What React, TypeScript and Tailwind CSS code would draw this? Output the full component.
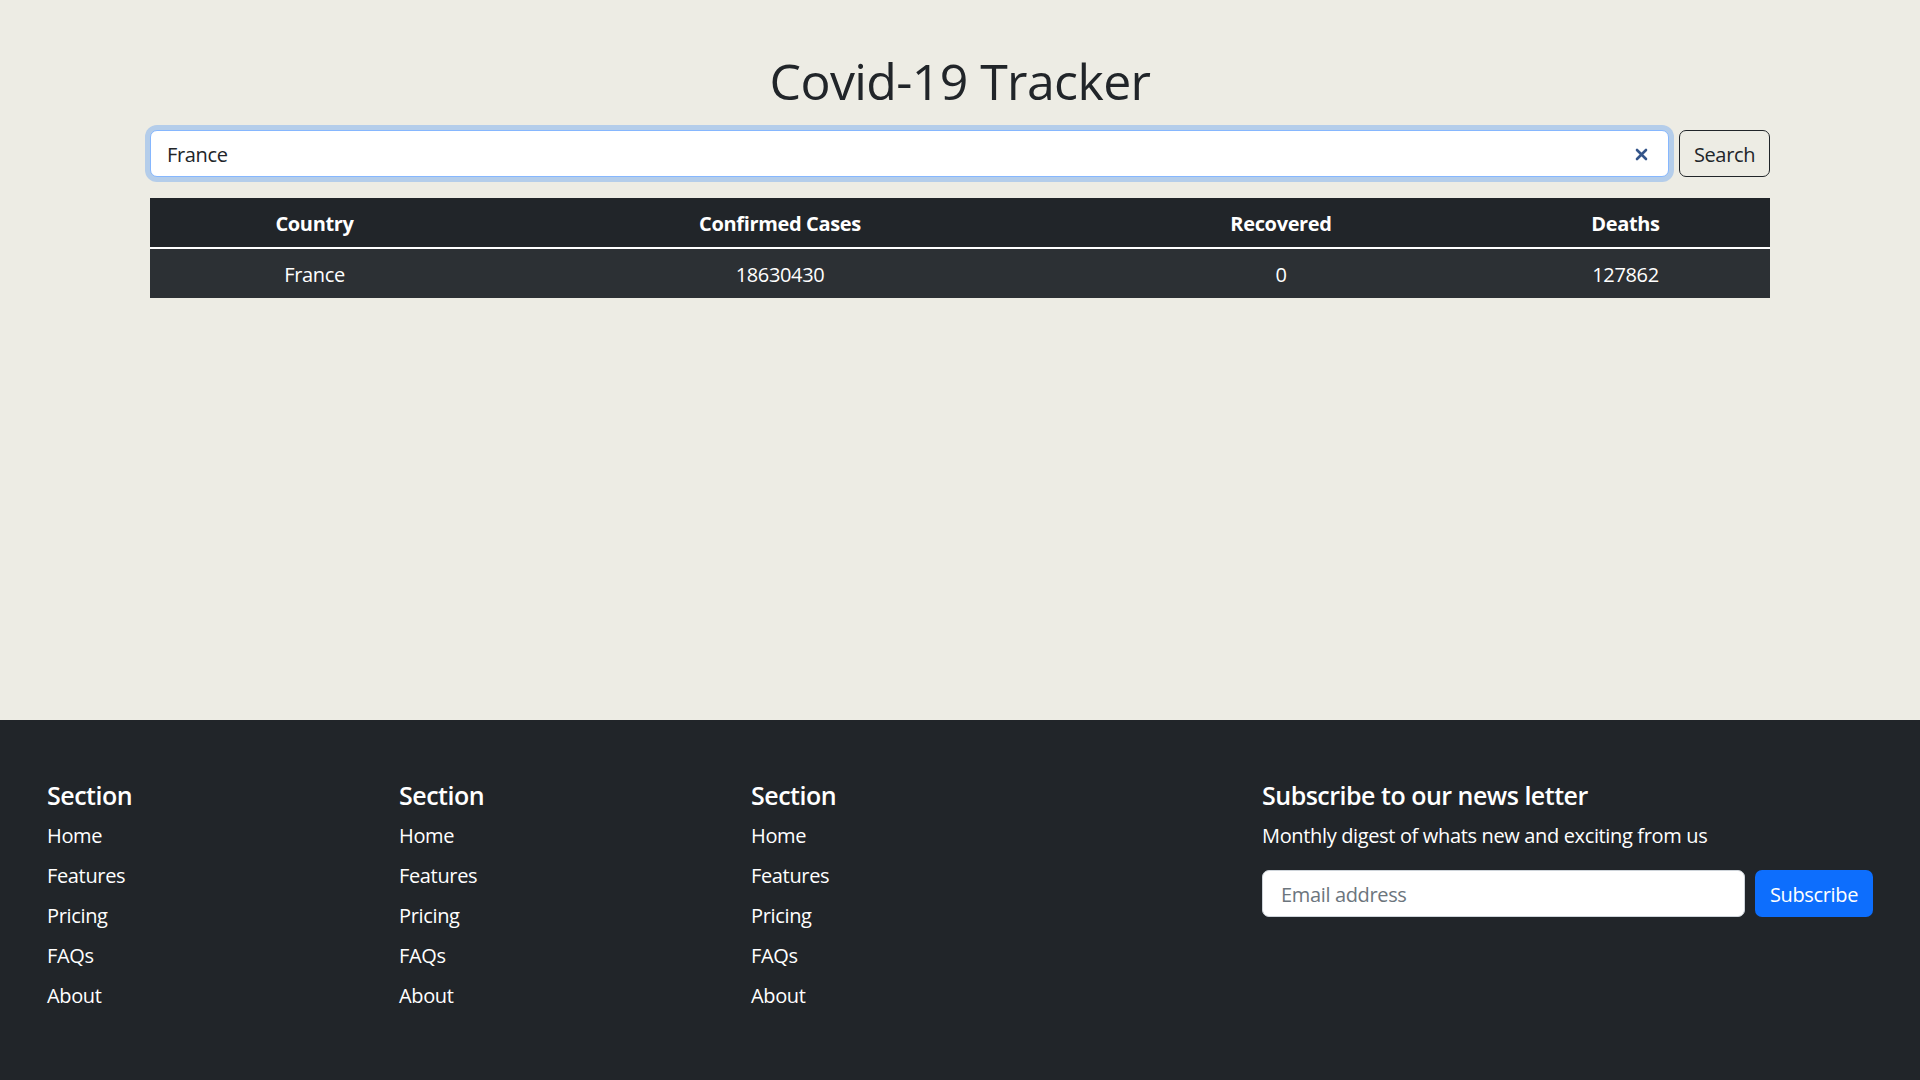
import { useState } from 'react';

const links = ['Home', 'Features', 'Pricing', 'FAQs', 'About'];

function FooterColumn() {
  return (
    <div className="w-[352px] shrink-0">
      <h5 className="text-[25px] leading-[30px] font-semibold text-white mb-[10px] tracking-[-0.5px]">Section</h5>
      <ul className="flex flex-col">
        {links.map((l) => (
          <li key={l} className="mb-[10px] text-[20px] leading-[28px] text-white pt-[2px]">
            {l}
          </li>
        ))}
      </ul>
    </div>
  );
}

export default function App() {
  const [query, setQuery] = useState('France');

  return (
    <div className="w-[1920px] font-['Open_Sans','Noto_Sans',sans-serif] text-[#212529] tracking-[-0.35px]">
      {/* Main tracker area */}
      <main className="h-[720px] bg-[#edece4] pt-[51px]">
        <div className="w-[1620px] mx-auto">
          <h1 className="text-center text-[50px] leading-[60px] font-medium text-[#212529] tracking-[-0.6px]">
            Covid-19 Tracker
          </h1>

          {/* Search form */}
          <div className="mt-[19px] flex gap-[10px]">
            <div className="flex-1 h-[47px] flex items-center justify-between bg-white border border-[#86b7fe] rounded-[7px] shadow-[0_0_0_5px_rgba(13,110,253,0.25)] pl-[16px] pr-[20px] pt-[2px]">
              <input
                value={query}
                onChange={(e) => setQuery(e.target.value)}
                className="flex-1 bg-transparent outline-none text-[20px] text-[#212529]"
              />
              <svg width="13" height="13" viewBox="0 0 13 13" className="shrink-0">
                <path d="M2 2 L11 11 M11 2 L2 11" stroke="#34558a" strokeWidth="2.6" strokeLinecap="round" />
              </svg>
            </div>
            <button className="w-[91px] h-[47px] border border-[#212529] rounded-[7px] text-[20px] text-[#212529] bg-transparent pt-[2px]">
              Search
            </button>
          </div>

          {/* Results table */}
          <table className="mt-[21px] w-full table-fixed text-white text-[20px] text-center">
            <thead className="bg-[#212529]">
              <tr className="h-[50px] border-b-2 border-white">
                <th className="w-[329px] font-bold pt-[2px]">Country</th>
                <th className="w-[602px] font-bold pt-[2px]">Confirmed Cases</th>
                <th className="w-[400px] font-bold pt-[2px]">Recovered</th>
                <th className="w-[289px] font-bold pt-[2px]">Deaths</th>
              </tr>
            </thead>
            <tbody className="bg-[#2c3034]">
              <tr className="h-[50px]">
                <td className="pt-[2px]">France</td>
                <td className="pt-[2px]">18630430</td>
                <td className="pt-[2px]">0</td>
                <td className="pt-[2px]">127862</td>
              </tr>
            </tbody>
          </table>
        </div>
      </main>

      {/* Footer */}
      <footer className="h-[360px] bg-[#212529] pt-[60px] pl-[47px] flex">
        <FooterColumn />
        <FooterColumn />
        <FooterColumn />
        <div className="ml-[159px] w-[611px]">
          <h5 className="text-[25px] leading-[30px] font-semibold text-white mb-[10px] tracking-[-0.5px]">
            Subscribe to our news letter
          </h5>
          <p className="text-[20px] leading-[28px] text-white mb-[20px] pt-[2px]">
            Monthly digest of whats new and exciting from us
          </p>
          <div className="flex gap-[10px]">
            <input
              placeholder="Email address"
              className="flex-1 h-[47px] bg-white border border-[#ced4da] rounded-[7px] px-[18px] pt-[2px] text-[20px] text-[#212529] placeholder:text-[#6c757d] outline-none"
            />
            <button className="w-[118px] h-[47px] bg-[#0d6efd] rounded-[7px] text-white text-[20px] pt-[2px]">
              Subscribe
            </button>
          </div>
        </div>
      </footer>
    </div>
  );
}
